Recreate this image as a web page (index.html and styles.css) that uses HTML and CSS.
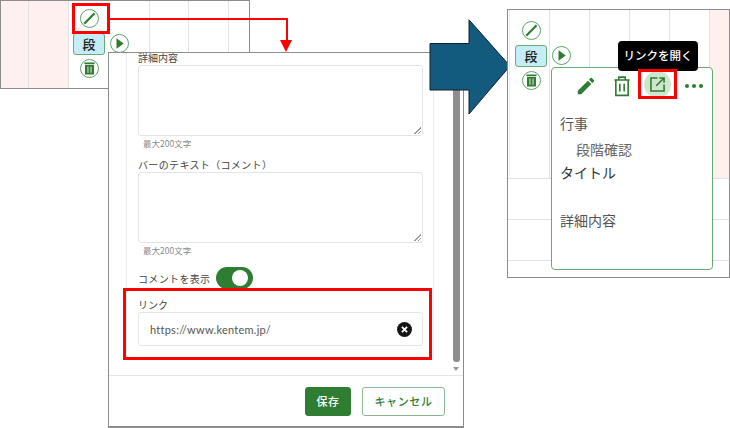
FILE: index.html
```html
<!DOCTYPE html>
<html lang="ja">
<head>
<meta charset="utf-8">
<title>リンク</title>
<link rel="stylesheet" href="styles.css">
</head>
<body>
<div class="canvas">

  <section class="sheet sheet-left">
    <div class="col col-pink w28"></div>
    <div class="col col-pink w40"></div>
    <div class="col w81"></div>
    <div class="col w39"></div>
    <div class="col w40"></div>
    <div class="col grow last"></div>
  </section>

  <div class="tools tools-left">
    <span class="round r-pen"><svg viewBox="0 0 20 20"><path d="M3.800 16.200 16 3.800" class="pen"/></svg></span>
    <span class="tag">段</span>
    <span class="round r-play"><svg viewBox="0 0 20 20"><path d="M6.500 3.800 15 10 6.500 16.200z" class="fill"/></svg></span>
    <span class="round r-trash"><svg viewBox="0 0 20 20"><path d="M4 3h12v1.800H4zM4.700 5.500h10.600v11.500H4.700z" class="fill"/><path d="M8.200 7.500v7.500M11.800 7.500v7.500" class="bars"/></svg></span>
  </div>

  <div class="callout callout-pen"></div>
  <div class="conn conn-h"></div>
  <div class="conn conn-v"></div>
  <div class="conn-head"></div>

  <section class="modal">
    <div class="modal-body">
      <div class="guide"></div>
      <div class="form">
        <label class="label label-top">詳細内容</label>
        <div class="area"><i class="grip"></i></div>
        <p class="hint">最大200文字</p>
        <label class="label label-bar">バーのテキスト（コメント）</label>
        <div class="area"><i class="grip"></i></div>
        <p class="hint">最大200文字</p>
        <div class="toggle-row">
          <span>コメントを表示</span>
          <span class="switch"><i></i></span>
        </div>
        <label class="label label-link">リンク</label>
        <div class="input">
          <span>https://www.kentem.jp/</span>
          <span class="clear"><svg viewBox="0 0 14 14"><path d="M4.600 4.600 9.400 9.400M9.400 4.600 4.600 9.400"/></svg></span>
        </div>
      </div>
      <div class="scroll"><i class="thumb"></i><i class="down"></i></div>
    </div>
    <footer class="modal-foot">
      <button class="btn primary">保存</button>
      <button class="btn ghost">キャンセル</button>
    </footer>
    <div class="callout callout-link"></div>
  </section>

  <svg class="big-arrow" viewBox="0 0 84 96"><path d="M1 24.500H40V.8L81 47 40 95V71H1z"/></svg>

  <section class="sheet sheet-right">
    <div class="rows">
      <div class="row-top">
        <div class="col first-col"></div>
        <div class="col w40"></div>
        <div class="col w40"></div>
        <div class="col w40"></div>
        <div class="col w40"></div>
        <div class="col col-pink grow last"></div>
      </div>
      <div class="row-line"></div>
      <div class="row-line"></div>
    </div>
  </section>

  <div class="tools tools-right">
    <span class="round r-pen"><svg viewBox="0 0 20 20"><path d="M3.800 16.200 16 3.800" class="pen"/></svg></span>
    <span class="tag">段</span>
    <span class="round r-play"><svg viewBox="0 0 20 20"><path d="M6.500 3.800 15 10 6.500 16.200z" class="fill"/></svg></span>
    <span class="round r-trash"><svg viewBox="0 0 20 20"><path d="M4 3h12v1.800H4zM4.700 5.500h10.600v11.500H4.700z" class="fill"/><path d="M8.200 7.500v7.500M11.800 7.500v7.500" class="bars"/></svg></span>
  </div>

  <article class="pop">
    <div class="pop-icons">
      <svg class="ic ic-pen" viewBox="0 0 24 24"><path d="M3 17.200V21h3.800L17.800 9.900l-3.700-3.700zM20.700 7a1 1 0 0 0 0-1.400l-2.300-2.300a1 1 0 0 0-1.400 0l-1.800 1.800 3.700 3.700z"/></svg>
      <svg class="ic ic-trash" viewBox="0 0 24 24"><path d="M5 6.500h14M9 6V3.800h6V6M6.300 6.500v14.200h11.400V6.500M10 10v7M14 10v7"/></svg>
      <span class="ic-hover"><svg class="ic ic-open" viewBox="0 0 24 24"><path d="M12 4.500H4.500v15h15V12M10.500 13.500 19.500 4.500M14 4.500h5.500V10"/></svg></span>
      <span class="dots"><i></i><i></i><i></i></span>
    </div>
    <h3 class="pop-h first">行事</h3>
    <p class="pop-v">段階確認</p>
    <h3 class="pop-h dark">タイトル</h3>
    <h3 class="pop-h gap">詳細内容</h3>
  </article>

  <div class="tooltip">リンクを開く</div>
  <div class="callout callout-open"></div>
</div>
</body>
</html>
```
FILE: styles.css
```css
* { box-sizing: border-box; }
html, body { margin: 0; padding: 0; background: #fff; }
body { font-family: "Noto Sans CJK JP", "Noto Sans", sans-serif; color: #333; }
.canvas { position: relative; width: 730px; height: 428px; overflow: hidden; }

.sheet { position: absolute; border: 1px solid #8c8c8c; background: #fff; display: flex; }
.sheet-left { left: 0; top: 0; width: 250px; height: 89px; }
.sheet-right { left: 507px; top: 9px; width: 223px; height: 269px; }
.col { border-right: 1px solid #e2e2e2; height: 100%; flex: none; }
.col.last { border-right: 0; }
.col-pink { background: #fdf0ee; }
.w28 { width: 28px; } .w39 { width: 39px; } .w40 { width: 40px; } .w81 { width: 81px; }
.first-col { width: 41px; margin-left: 1px; border-left: 1px solid #eee; }
.grow { flex: 1; }
.rows { display: flex; flex-direction: column; width: 100%; }
.row-top { display: flex; height: 169px; border-bottom: 1px solid #e2e2e2; }
.row-line { height: 41px; border-bottom: 1px solid #e2e2e2; }

.tools { position: absolute; width: 56px; height: 82px; }
.tools-left { left: 72px; top: 5px; }
.tools-right { left: 514px; top: 17px; }
.round { position: absolute; width: 19px; height: 19px; border: 1.5px solid #5ba36a; border-radius: 50%; background: #fff; }
.round svg { display: block; width: 100%; height: 100%; }
.r-pen { left: 8px; top: 4px; }
.r-play { left: 38px; top: 29px; }
.r-trash { left: 8px; top: 54px; }
.pen { stroke: #2e7d32; stroke-width: 2.600; fill: none; }
.fill { fill: #2e7d32; }
.bars { stroke: #cfe5cd; stroke-width: 1.300; fill: none; }
.tag { position: absolute; left: 1px; top: 28px; width: 32px; height: 22px; border: 1.5px solid #6aab78; border-radius: 3px; background: #c5edf5; color: #222; font-size: 13px; line-height: 19px; text-align: center; font-weight: 500; }

.callout { position: absolute; border: 3px solid #f00; }
.callout-pen { left: 72px; top: 3px; width: 38px; height: 31px; }
.conn { position: absolute; background: #f00; }
.conn-h { left: 110px; top: 18px; width: 178px; height: 2px; }
.conn-v { left: 286px; top: 18px; width: 2px; height: 23px; }
.conn-head { position: absolute; left: 280px; top: 40px; border: 6.500px solid transparent; border-top: 12px solid #f00; border-bottom: 0; }

.modal { position: absolute; left: 108px; top: 52px; width: 356px; height: 376px; background: #fff; border: 1px solid #8c8c8c; border-bottom-width: 2px; display: flex; flex-direction: column; }
.modal-body { flex: 1; display: flex; min-height: 0; border-bottom: 1px solid #e6e6e6; position: relative; }
.guide { position: absolute; left: 17px; top: 0; bottom: 15px; width: 1px; background: #ececec; }
.guide::after { content: ""; position: absolute; left: 307px; top: 0; bottom: 0; width: 1px; background: #ececec; }
.form { width: 344px; padding: 0 0 0 29px; flex: none; }
.label { display: block; font-size: 10px; line-height: 14px; color: #444; letter-spacing: 0; margin-top: 7px; }
.label-top { margin-top: 0; height: 12px; line-height: 10px; }
.label-bar { letter-spacing: .35px; }
.area { position: relative; width: 285px; height: 71px; border: 1px solid #e4e4e4; border-radius: 3px; background: #fff; }
.grip { position: absolute; right: 1px; bottom: 1px; width: 7px; height: 7px; background: linear-gradient(135deg, transparent 50%, #999 50%, #999 58%, transparent 58%, transparent 74%, #999 74%, #999 82%, transparent 82%); }
.hint { margin: 0; padding-left: 5px; font-size: 8.500px; line-height: 15px; color: #8a8a8a; height: 15px; }
.toggle-row { display: flex; align-items: center; gap: 6px; height: 26px; margin-top: 7px; font-size: 10px; color: #444; letter-spacing: .35px; }
.switch { width: 37px; height: 22px; border-radius: 11px; background: #2e7d32; position: relative; flex: none; }
.switch i { position: absolute; right: 5px; top: 3px; width: 16px; height: 16px; border-radius: 50%; background: #fff; }
.label-link { margin-top: 7px; }
.input { width: 285px; height: 34px; margin-top: 0; border: 1px solid #e6e6e6; border-radius: 3px; display: flex; align-items: center; justify-content: space-between; padding: 0 10px 0 11px; font-family: "Lato", "Noto Sans", sans-serif; font-size: 11px; color: #555; letter-spacing: .25px; }
.clear { width: 15px; height: 15px; border-radius: 50%; background: #161616; }
.clear svg { display: block; width: 15px; height: 15px; stroke: #fff; stroke-width: 1.700; fill: none; }
.scroll { position: absolute; left: 344px; top: 0; bottom: 0; width: 10px; }
.thumb { position: absolute; left: 0; top: 0; bottom: 13px; width: 7px; border-radius: 0 0 3px 3px; background: #8e8e8e; }
.down { position: absolute; left: 0; bottom: 4px; border: 3.500px solid transparent; border-top: 4px solid #999; border-bottom: 0; }
.modal-foot { height: 50px; flex: none; display: flex; justify-content: flex-end; align-items: center; gap: 11px; padding: 0 18px 0 0; }
.btn { font-family: inherit; height: 29px; border-radius: 3px; font-size: 11px; letter-spacing: .6px; font-weight: 500; padding: 0; }
.primary { width: 46px; background: #2e7d32; color: #fff; border: 1px solid #2e7d32; }
.ghost { width: 83px; background: #fff; color: #2e7d32; border: 1px solid #8ab893; }
.callout-link { left: 14px; top: 235px; width: 309px; height: 72px; }

.big-arrow { position: absolute; left: 429px; top: 19px; width: 84px; height: 96px; }
.big-arrow path { fill: #125b7e; stroke: #10202c; stroke-width: 1; }

.pop { position: absolute; left: 551px; top: 67px; width: 162px; height: 203px; background: #fff; border: 1.500px solid #69a976; border-radius: 4px; padding: 0 0 0 8px; }
.pop-icons { position: absolute; left: 23px; top: 7px; width: 130px; height: 24px; }
.ic { position: absolute; width: 22px; height: 22px; }
.ic-pen { left: 0; top: 0; fill: #2e7d32; }
.ic-trash { left: 33.500px; top: -2.500px; width: 26px; height: 26px; stroke: #2e7d32; fill: none; stroke-width: 1.500; }
.ic-hover { position: absolute; left: 68.500px; top: -4px; width: 27px; height: 27px; border-radius: 50%; background: #cfe5cd; }
.ic-open { left: 3px; top: 3px; width: 21px; height: 21px; stroke: #2e7d32; fill: none; stroke-width: 1.800; }
.dots { position: absolute; left: 110px; top: 9px; display: flex; gap: 3px; }
.dots i { width: 4px; height: 4px; border-radius: 50%; background: #2e7d32; }
.pop-h { margin: 0; font-size: 14px; line-height: 18px; font-weight: 400; color: #555; }
.pop-h.first { margin-top: 45.500px; }
.pop-v { margin: 8px 0 0 16px; font-size: 14px; line-height: 18px; color: #666; }
.pop-h.dark { margin-top: 5px; color: #333; }
.pop-h.gap { margin-top: 30px; }

.tooltip { position: absolute; left: 618px; top: 41px; width: 80px; height: 30px; border-radius: 4px; background: #000; color: #fff; font-size: 11.500px; line-height: 29px; text-align: center; font-weight: 500; }
.callout-open { left: 638px; top: 69px; width: 39px; height: 30px; }
```
